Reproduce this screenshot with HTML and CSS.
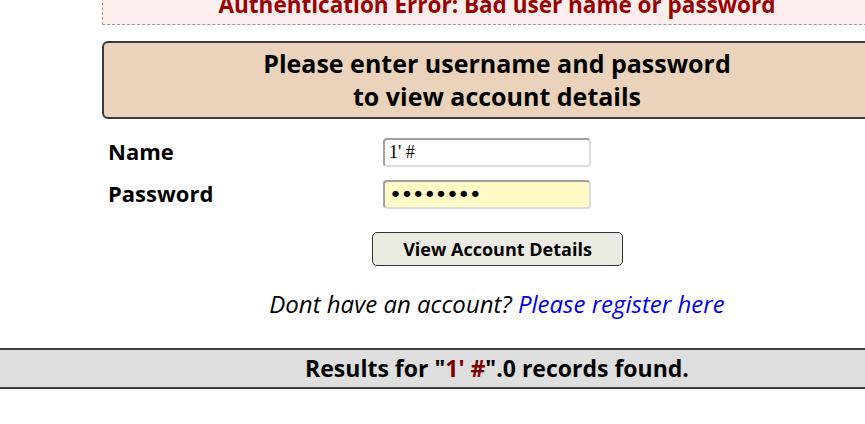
FILE: index.html
```html
<!DOCTYPE html>
<html>
<head>
<meta charset="utf-8">
<link rel="stylesheet" href="styles.css">
</head>
<body>
<div class="page">
  <div class="content">
    <div class="error">Authentication Error: Bad user name or password</div>
    <div class="heading">Please enter username and password<br>to view account details</div>
    <form class="login">
      <div class="row">
        <label class="label">Name</label>
        <input class="field" type="text" value="1' #">
      </div>
      <div class="row">
        <label class="label">Password</label>
        <input class="field field-pass" type="password" value="password">
      </div>
      <div class="actions">
        <button class="submit" type="button">View Account Details</button>
      </div>
      <p class="register">Dont have an account? <a href="#">Please register here</a></p>
    </form>
  </div>
  <div class="results">Results for "<span class="query">1' #</span>".0 records found.</div>
</div>
</body>
</html>
```

FILE: styles.css
```css
html, body {
  margin: 0;
  padding: 0;
  background: #fff;
  overflow: hidden;
}
body {
  width: 865px;
  height: 424px;
  font-family: "Open Sans", "Noto Sans", sans-serif;
  color: #000;
}
.page {
  width: 1000px;
  margin-top: -22px;
}
.content {
  margin-left: 102px;
  width: 790px;
}
.error {
  background: #fdeeee;
  border: 1px dashed #9a9a9a;
  border-top: none;
  color: #990000;
  font-weight: bold;
  font-size: 22.5px;
  text-align: center;
  height: 47px;
  line-height: 30px;
  box-sizing: border-box;
  padding-top: 12px;
}
.heading {
  margin-top: 16px;
  background: #ebd2bb;
  border: 2px solid #3a3a3a;
  border-radius: 6px;
  height: 78px;
  box-sizing: border-box;
  text-align: center;
  font-weight: bold;
  font-size: 25px;
  line-height: 33px;
  padding-top: 4px;
}
.login {
  margin: 0;
  padding-top: 19px;
}
.row {
  display: grid;
  grid-template-columns: 281px 208px;
  align-items: center;
  margin-bottom: 13px;
}
.label {
  padding-left: 6px;
  font-weight: bold;
  font-size: 22px;
  line-height: 29px;
  margin-top: -3px;
}
.field {
  width: 208px;
  height: 29px;
  box-sizing: border-box;
  border: 2px solid #a0a0a0;
  border-bottom-color: #dcdcdc;
  border-right-color: #dcdcdc;
  border-radius: 4px;
  font-family: "Liberation Serif", serif;
  font-size: 18px;
  padding: 0 4px;
  background: #fff;
}
.field-pass {
  background: #fffac6;
  font-family: "DejaVu Sans", sans-serif;
  font-size: 22px;
  letter-spacing: -1.6px;
}
.actions {
  padding-left: 270px;
  margin-top: 23px;
}
.submit {
  display: block;
  width: 251px;
  height: 34px;
  background: #ebebe3;
  border: 1.5px solid #333;
  border-radius: 5px;
  font-family: "Open Sans", sans-serif;
  font-weight: bold;
  font-size: 18px;
  color: #000;
  padding: 0;
}
.register {
  margin: 22px 0 0;
  text-align: center;
  font-style: italic;
  font-size: 24px;
  line-height: 32px;
}
.register a {
  color: #0000ee;
  text-decoration: none;
}
.results {
  margin-top: 28px;
  width: 994px;
  height: 41px;
  box-sizing: border-box;
  background: #dedede;
  border-top: 2px solid #404040;
  border-bottom: 2px solid #404040;
  text-align: center;
  font-weight: bold;
  font-size: 23px;
  line-height: 37px;
}
.query {
  color: #7a0000;
}
```
